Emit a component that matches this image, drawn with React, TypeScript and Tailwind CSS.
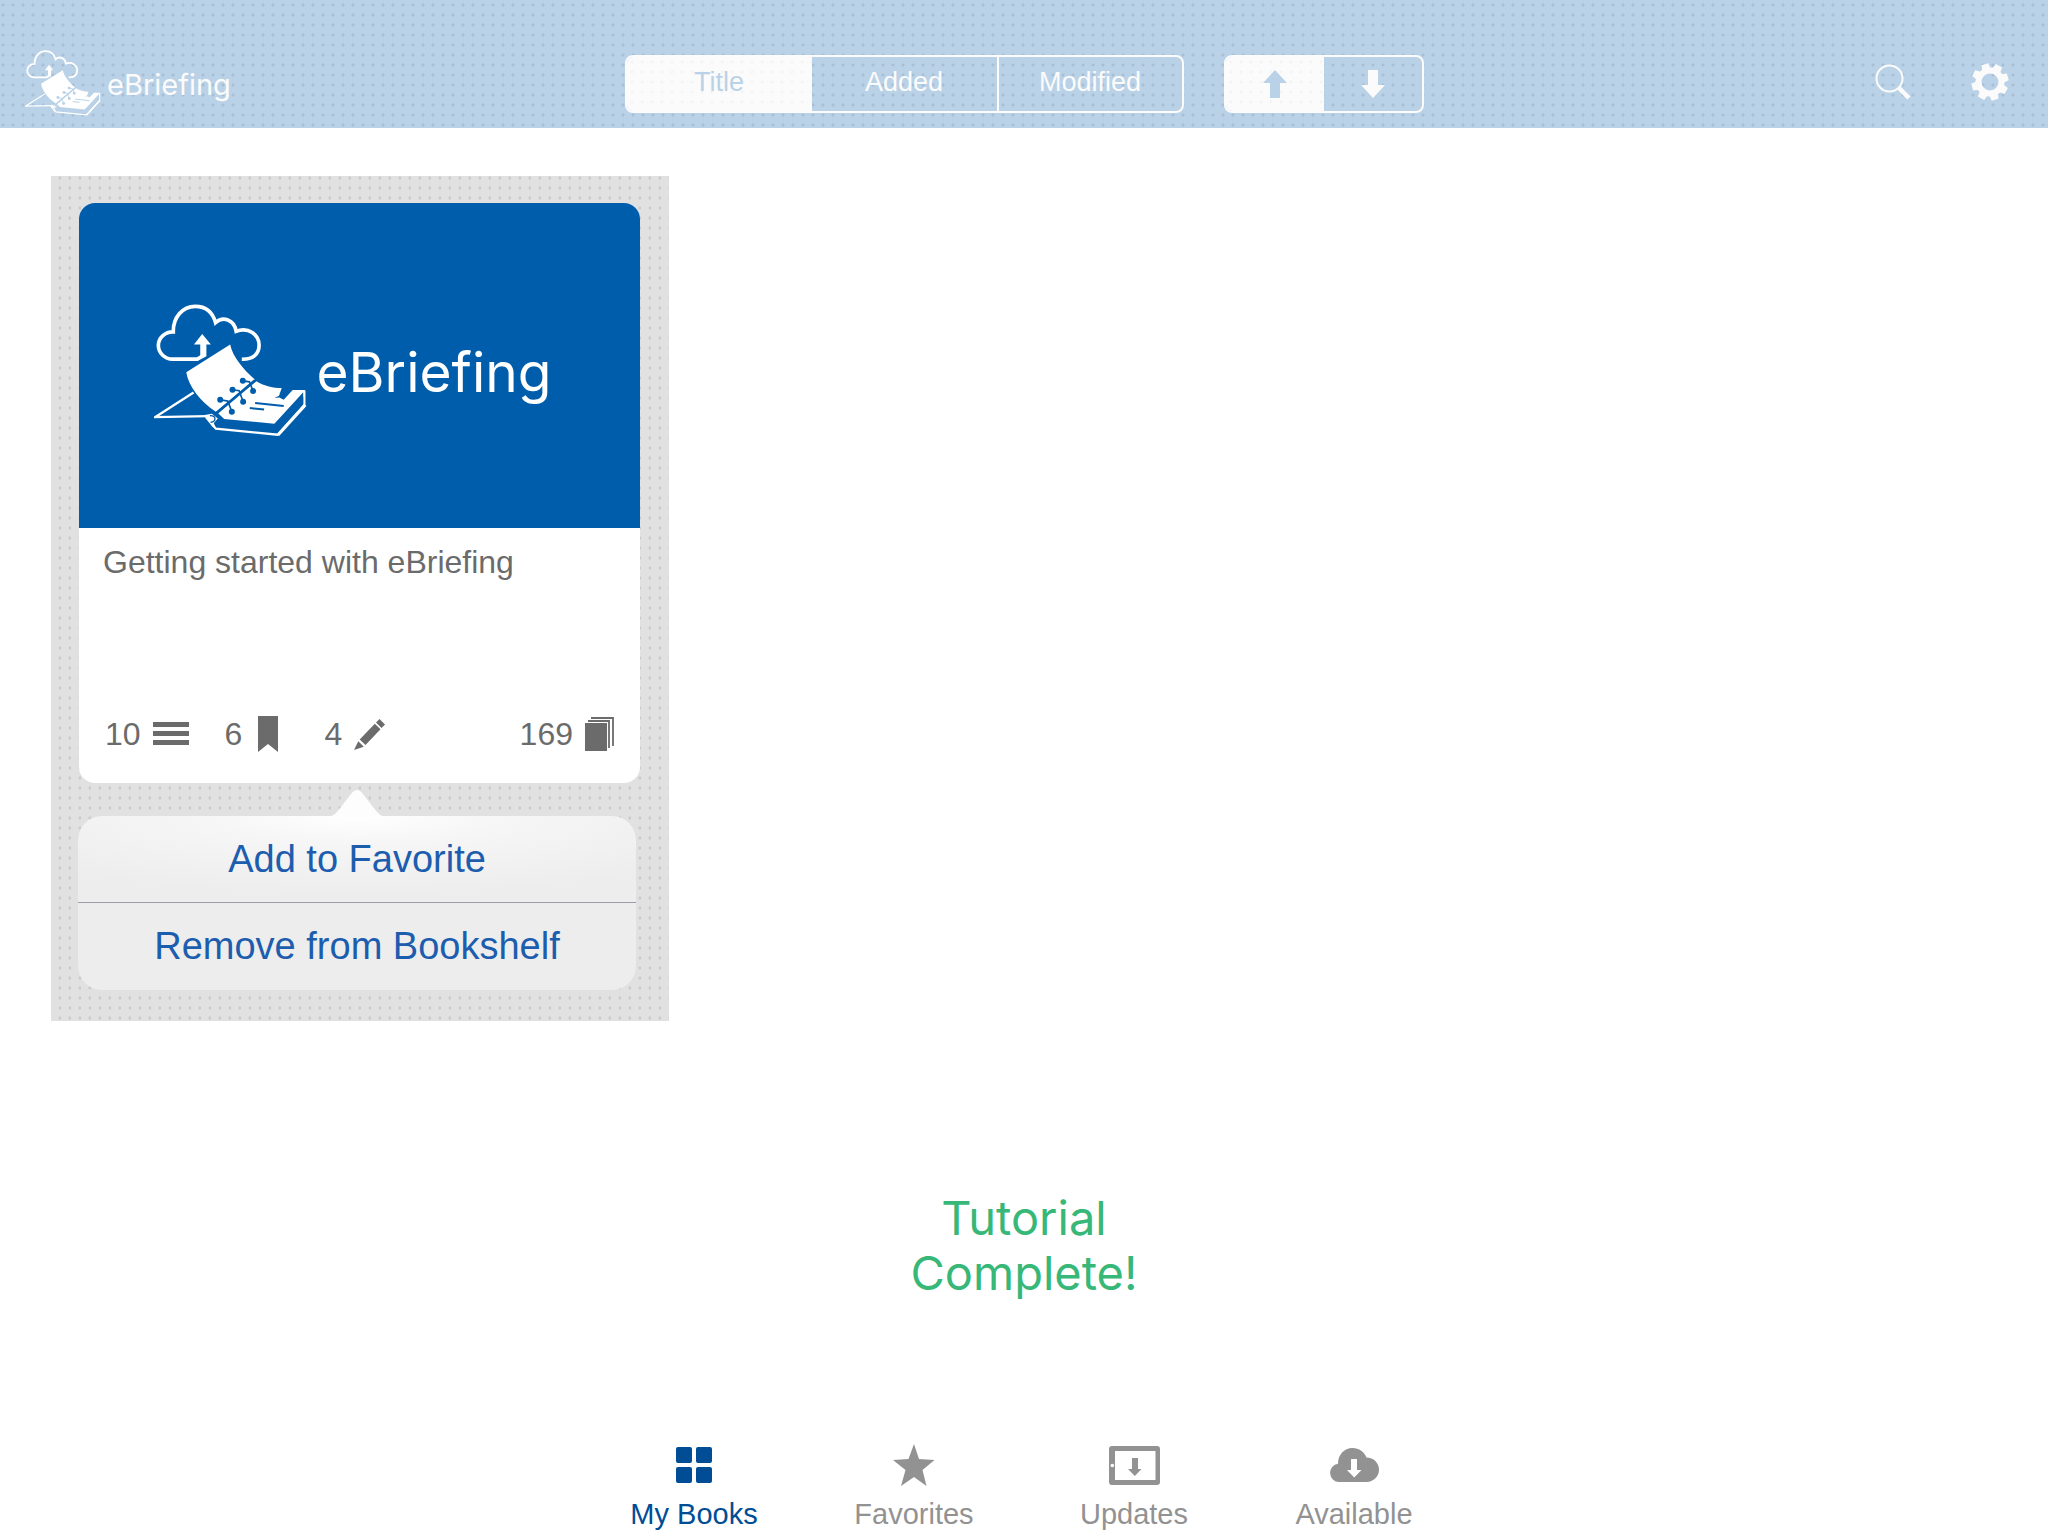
import React, { useState } from "react";

const dots =
  "bg-[radial-gradient(circle_at_3px_5px,rgba(90,110,135,0.2)_1px,transparent_2px)] bg-[length:10px_10px]";
const greyDots =
  "bg-[radial-gradient(circle_at_9px_2px,rgba(110,110,110,0.2)_1px,transparent_2px)] bg-[length:10px_10px]";
const whiteDots =
  "bg-[radial-gradient(circle_at_5px_5px,rgba(110,110,110,0.05)_1px,transparent_2px)] bg-[length:10px_10px]";

function Logo({ className, ink }: { className: string; ink: string }) {
  return (
    <svg viewBox="36 42 460 400" className={className} fill="none" aria-hidden="true">
      <path
        d="M188 162V196L166 208H92A44 41 0 0 1 94 126C93 83 121 49 160 49C190 49 212 65 221 98C243 78 277 88 283 124C320 110 352 134 352 166C352 194 332 209 300 208"
        stroke="white"
        strokeWidth="11"
      />
      <path d="M181 132L207 164H156Z" fill="white" />
      <path d="M175 158H188V198L170 206H164L175 196Z" fill="white" />
      <path d="M265 164C272 200 305 240 340 270L222 366C175 335 140 290 133 247Z" fill="white" />
      <path d="M344 274C368 289 395 294 420 295L412 318L398 325L413 323L426 330L453 301H491L398 402L247 388L228 370Z" fill="white" />
      <path d="M155 308L40 382L198 379" stroke="white" strokeWidth="7" />
      <path d="M488 302V346L408 435L222 417L192 382" stroke="white" strokeWidth="7" />
      <path d="M491 346L409 436" stroke="white" strokeWidth="9" />
      <path d="M188 376L210 372L228 386L216 400L222 418L210 410Z" fill="white" />
      <path d="M204 378C224 376 224 396 206 398" stroke={ink} strokeWidth="4" />
      <path d="M485 322V342L404 430L398 404Z" fill={ink} />
      <path d="M340 271L222 372" stroke={ink} strokeWidth="8" />
      <g stroke={ink} strokeWidth="5">
        <path d="M303 273L323 276L334 304" />
        <path d="M272 300L292 303L304 336" />
        <path d="M235 330L258 334L270 366" />
      </g>
      <g fill={ink}>
        <circle cx="303" cy="273" r="9" />
        <circle cx="272" cy="300" r="9" />
        <circle cx="235" cy="330" r="9" />
        <circle cx="334" cy="304" r="9" />
        <circle cx="304" cy="336" r="9" />
        <circle cx="270" cy="366" r="9" />
      </g>
      <path d="M340 340L426 349M324 355L367 359" stroke={ink} strokeWidth="6" />
    </svg>
  );
}

function Arrow({ down = false }: { down?: boolean }) {
  return (
    <svg viewBox="0 0 24 28" className={down ? "h-7 w-6 rotate-180" : "h-7 w-6"} fill="currentColor" aria-hidden="true">
      <path d="M12 0L24 13H17V28H7V13H0Z" />
    </svg>
  );
}

function Gear() {
  const teeth = [0, 45, 90, 135, 180, 225, 270, 315];
  return (
    <svg viewBox="-19 -19 38 38" className="size-[38px]" aria-hidden="true">
      <circle r="11.5" fill="none" stroke="#fbfbfb" strokeWidth="6" />
      {teeth.map((a) => (
        <path key={a} d="M-4.500 -12L-3.500 -18.500H3.500L4.500 -12Z" fill="#fbfbfb" transform={`rotate(${a - 16})`} />
      ))}
    </svg>
  );
}

const sorts = ["Title", "Added", "Modified"];

function Header() {
  const [sort, setSort] = useState("Title");
  const [down, setDown] = useState(false);
  return (
    <header className={`grid h-32 grid-cols-[1fr_auto_1fr] items-end bg-[#bad2e7] ${dots}`}>
      <div className="flex items-end gap-1.5 pb-3 pl-[25px]">
        <Logo className="h-[66px] w-[76px]" ink="#bad2e7" />
        <span className="pb-[11px] font-[Inter] text-[29px] leading-10 text-[#fbfbfb]">eBriefing</span>
      </div>
      <div className="flex gap-10 pb-[15px]">
        <div className="flex h-[58px] overflow-hidden rounded-lg border-2 border-[#fbfbfb]">
          {sorts.map((s, i) => (
            <button
              key={s}
              type="button"
              onClick={() => setSort(s)}
              className={`w-[185px] pb-1 font-['Liberation_Sans',sans-serif] text-[27px] ${i === 2 ? "border-l-2 border-[#fbfbfb]" : ""} ${
                s === sort ? `bg-[#fbfbfb] text-[#bad2e7] ${whiteDots}` : "text-[#fbfbfb]"
              }`}
            >
              {s}
            </button>
          ))}
        </div>
        <div className="flex h-[58px] overflow-hidden rounded-lg border-2 border-[#fbfbfb]">
          {[false, true].map((d) => (
            <button
              key={String(d)}
              type="button"
              aria-label={d ? "Descending" : "Ascending"}
              onClick={() => setDown(d)}
              className={`flex w-[98px] items-center justify-center ${d === down ? `bg-[#fbfbfb] text-[#bad2e7] ${whiteDots}` : "text-[#fbfbfb]"}`}
            >
              <Arrow down={d} />
            </button>
          ))}
        </div>
      </div>
      <div className="flex items-center justify-end gap-[60px] pr-[39px] pb-[27px]">
        <button type="button" aria-label="Search">
          <svg viewBox="0 0 36 36" className="size-9" fill="none" stroke="#fbfbfb" aria-hidden="true">
            <circle cx="14.500" cy="14.500" r="13" strokeWidth="2" />
            <path d="M24 24L34 34" strokeWidth="4.500" />
          </svg>
        </button>
        <button type="button" aria-label="Settings">
          <Gear />
        </button>
      </div>
    </header>
  );
}

function BookCard() {
  return (
    <article className="overflow-hidden rounded-2xl bg-white">
      <div className="flex h-[325px] items-center justify-center gap-2.5 bg-[#005dab] pt-2.5 pr-3.5">
        <Logo className="h-[133px] w-[153px]" ink="#005dab" />
        <h2 className="pt-1 font-[Inter] text-[55px] leading-none font-normal text-white">eBriefing</h2>
      </div>
      <div className="flex h-[255px] flex-col justify-between px-6 pt-3 pb-6 text-[#6b6b6b]">
        <p className="text-[32px] leading-[44px]">Getting started with eBriefing</p>
        <div className="flex items-center px-0.5 text-[32px] leading-[50px]">
          <span className="flex items-center gap-3">
            10
            <svg viewBox="0 0 36 24" className="h-6 w-9" fill="currentColor" aria-label="chapters">
              <path d="M0 0H36V5H0ZM0 9H36V14H0ZM0 18H36V23H0Z" />
            </svg>
          </span>
          <span className="ml-9 flex items-center gap-4">
            6
            <svg viewBox="0 0 20 36" className="h-9 w-5" fill="currentColor" aria-label="bookmarks">
              <path d="M0 0H20V36L10 28L0 36Z" />
            </svg>
          </span>
          <span className="ml-[46px] flex items-center gap-3">
            4
            <svg viewBox="0 0 31 31" className="size-[31px]" fill="currentColor" aria-label="notes">
              <path d="M25.500 0L31 5.500L27.500 9L22 3.500ZM20.800 4.800L26.500 10.300L11.500 26L5.700 20.600ZM4.300 22.300L9.800 27.800L0 31Z" />
            </svg>
          </span>
          <span className="ml-auto flex items-center gap-3">
            169
            <svg viewBox="0 0 29 34" className="h-[34px] w-[29px]" fill="none" stroke="currentColor" aria-label="pages">
              <path d="M0 6H22V34H0Z" fill="currentColor" stroke="none" />
              <path d="M3 4H24V31M6 1H28V29" strokeWidth="1.800" />
            </svg>
          </span>
        </div>
      </div>
    </article>
  );
}

function ActionMenu() {
  return (
    <div className="relative mt-[33px] mr-1 -ml-px rounded-3xl bg-[#ededed] bg-[radial-gradient(ellipse_75%_90%_at_50%_0%,#ffffff_0%,#f6f6f6_35%,#ededed_100%)] bg-[length:100%_87px] bg-no-repeat text-[38px] text-[#1d5dae]">
      <svg viewBox="0 0 60 28" className="absolute -top-[27px] left-1/2 h-7 w-[60px] -translate-x-1/2" fill="#fdfdfd" aria-hidden="true">
        <path d="M0 28C8 27 10 23 14 18L24 5Q30 -3 36 5L46 18C50 23 52 27 60 28Z" />
      </svg>
      <button type="button" className="block h-[87px] w-full border-b border-[#9d9da8]">
        Add to Favorite
      </button>
      <button type="button" className="block h-[87px] w-full">
        Remove from Bookshelf
      </button>
    </div>
  );
}

const tabs = [
  {
    label: "My Books",
    icon: (
      <svg viewBox="0 0 36 36" className="size-9" fill="currentColor" aria-hidden="true">
        <rect width="16" height="16" rx="2" />
        <rect x="20" width="16" height="16" rx="2" />
        <rect y="20" width="16" height="16" rx="2" />
        <rect x="20" y="20" width="16" height="16" rx="2" />
      </svg>
    ),
  },
  {
    label: "Favorites",
    icon: (
      <svg viewBox="0 0 42 42" className="size-[42px]" fill="currentColor" aria-hidden="true">
        <path d="M21 0L26 15L41.500 16L29.500 26L33.500 42L21 33L8 42L12.500 26L0 16L15.500 15Z" />
      </svg>
    ),
  },
  {
    label: "Updates",
    icon: (
      <svg viewBox="0 0 51 39" className="h-[39px] w-[51px]" aria-hidden="true">
        <path fill="currentColor" fillRule="evenodd" d="M3 0H48Q51 0 51 3V36Q51 39 48 39H3Q0 39 0 36V3Q0 0 3 0ZM6 5V34H46.500V5Z" />
        <path fill="currentColor" d="M23 12H29V23H32.500L25.800 30L19 23H23Z" />
        <circle cx="3.300" cy="19.500" r="1.800" fill="white" />
      </svg>
    ),
  },
  {
    label: "Available",
    icon: (
      <svg viewBox="0 0 49 34" className="h-[34px] w-[49px]" aria-hidden="true">
        <path d="M9 34A9.200 9.200 0 0 1 8 15.700C8 7 14 0 22.500 0C29 0 34.500 4 36.500 9.500C43.500 9.500 49 15 49 21.800C49 28.500 43.500 34 36.500 34Z" fill="currentColor" />
        <path d="M21 11H27V22H31.500L24.200 29.500L17 22H21Z" fill="white" />
      </svg>
    ),
  },
];

export default function App() {
  const [tab, setTab] = useState("My Books");
  return (
    <div className="flex min-h-screen flex-col bg-white font-['Liberation_Sans',sans-serif]">
      <Header />
      <main className="flex flex-1 flex-col px-[51px] pt-12">
        <section className={`w-[618px] bg-[#e1e1e1] pt-[27px] pr-[29px] pb-[31px] pl-7 ${greyDots}`}>
          <BookCard />
          <ActionMenu />
        </section>
        <p className="mt-[169px] text-center font-[Inter] text-[47px] leading-[55px] text-[#38b878]">
          Tutorial
          <br />
          Complete!
        </p>
      </main>
      <nav className="flex justify-center pb-1">
        {tabs.map((t) => (
          <button
            key={t.label}
            type="button"
            onClick={() => setTab(t.label)}
            className={`flex w-[220px] flex-col items-center text-[29px] leading-9 ${t.label === tab ? "text-[#004d95]" : "text-[#929292]"}`}
          >
            <span className="flex h-[60px] items-center pb-0.5">{t.icon}</span>
            {t.label}
          </button>
        ))}
      </nav>
    </div>
  );
}
